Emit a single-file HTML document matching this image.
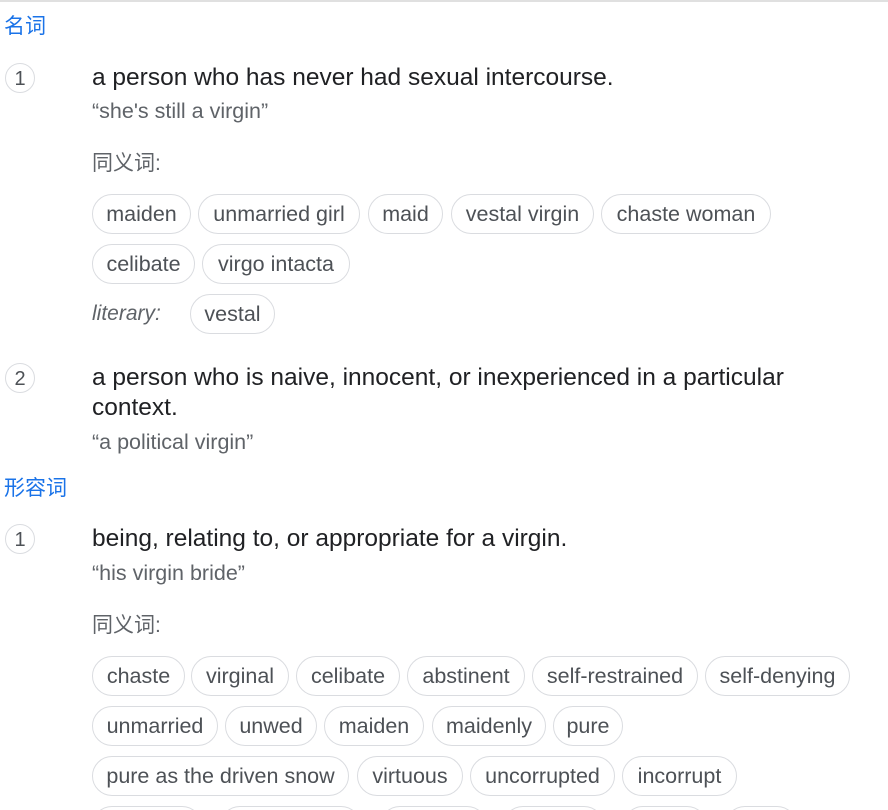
<!DOCTYPE html>
<html><head><meta charset="utf-8"><style>
html,body{margin:0;width:888px;height:810px;overflow:hidden}
body{background:#fff;position:relative;font-family:"Liberation Sans","Noto Sans CJK SC",sans-serif}
.t{position:absolute;white-space:nowrap;line-height:30px;height:30px}
.pos{color:#1a73e8;font-size:21px;left:4px}
.num{position:absolute;left:5px;width:28px;height:28px;border:1px solid #dadce0;border-radius:50%;text-align:center;line-height:30px;font-size:20px;color:#4d5156}
.def{left:92px;font-size:24.5px;color:#202124}
.ex{left:92px;font-size:21.5px;color:#5f6368}
.syn{left:92px;font-size:21px;color:#5f6368}
.c{position:absolute;height:38px;border:1px solid #dadce0;border-radius:20px;text-align:center;line-height:38px;font-size:21.5px;color:#4d5156;box-sizing:content-box;white-space:nowrap;overflow:hidden}
</style></head><body>
<div style="position:absolute;left:0;top:0;width:888px;height:2px;background:#e0e0e0"></div>
<div class="t pos" style="top:12px">名词</div>
<div class="num" style="top:63px">1</div>
<div class="t def" style="top:63px">a person who has never had sexual intercourse.</div>
<div class="t ex" style="top:96px">“she's still a virgin”</div>
<div class="t syn" style="top:149px">同义词:</div>
<div class="c" style="top:194px;left:92px;width:97px">maiden</div>
<div class="c" style="top:194px;left:198px;width:160px">unmarried girl</div>
<div class="c" style="top:194px;left:368px;width:73px">maid</div>
<div class="c" style="top:194px;left:451px;width:141px">vestal virgin</div>
<div class="c" style="top:194px;left:601px;width:168px">chaste woman</div>
<div class="c" style="top:244px;left:92px;width:101px">celibate</div>
<div class="c" style="top:244px;left:202px;width:146px">virgo intacta</div>
<div class="t syn" style="top:299px;font-style:italic">literary:</div>
<div class="c" style="top:294px;left:190px;width:83px">vestal</div>
<div class="num" style="top:363px">2</div>
<div class="t def" style="top:363px">a person who is naive, innocent, or inexperienced in a particular</div>
<div class="t def" style="top:393px">context.</div>
<div class="t ex" style="top:427px">“a political virgin”</div>
<div class="t pos" style="top:474px">形容词</div>
<div class="num" style="top:524px">1</div>
<div class="t def" style="top:524px">being, relating to, or appropriate for a virgin.</div>
<div class="t ex" style="top:558px">“his virgin bride”</div>
<div class="t syn" style="top:611px">同义词:</div>
<div class="c" style="top:656px;left:92px;width:91px">chaste</div>
<div class="c" style="top:656px;left:191px;width:96px">virginal</div>
<div class="c" style="top:656px;left:296px;width:102px">celibate</div>
<div class="c" style="top:656px;left:407px;width:116px">abstinent</div>
<div class="c" style="top:656px;left:532px;width:164px">self-restrained</div>
<div class="c" style="top:656px;left:705px;width:143px">self-denying</div>
<div class="c" style="top:706px;left:92px;width:124px">unmarried</div>
<div class="c" style="top:706px;left:225px;width:90px">unwed</div>
<div class="c" style="top:706px;left:324px;width:98px">maiden</div>
<div class="c" style="top:706px;left:432px;width:112px">maidenly</div>
<div class="c" style="top:706px;left:553px;width:68px">pure</div>
<div class="c" style="top:756px;left:92px;width:255px">pure as the driven snow</div>
<div class="c" style="top:756px;left:357px;width:104px">virtuous</div>
<div class="c" style="top:756px;left:470px;width:143px">uncorrupted</div>
<div class="c" style="top:756px;left:622px;width:113px">incorrupt</div>
<div class="c" style="top:806px;left:92px;width:108px"></div>
<div class="c" style="top:806px;left:220px;width:139px"></div>
<div class="c" style="top:806px;left:380px;width:105px"></div>
<div class="c" style="top:806px;left:503px;width:99px"></div>
<div class="c" style="top:806px;left:623px;width:82px"></div>
<div class="c" style="top:806px;left:725px;width:70px"></div>
</body></html>
